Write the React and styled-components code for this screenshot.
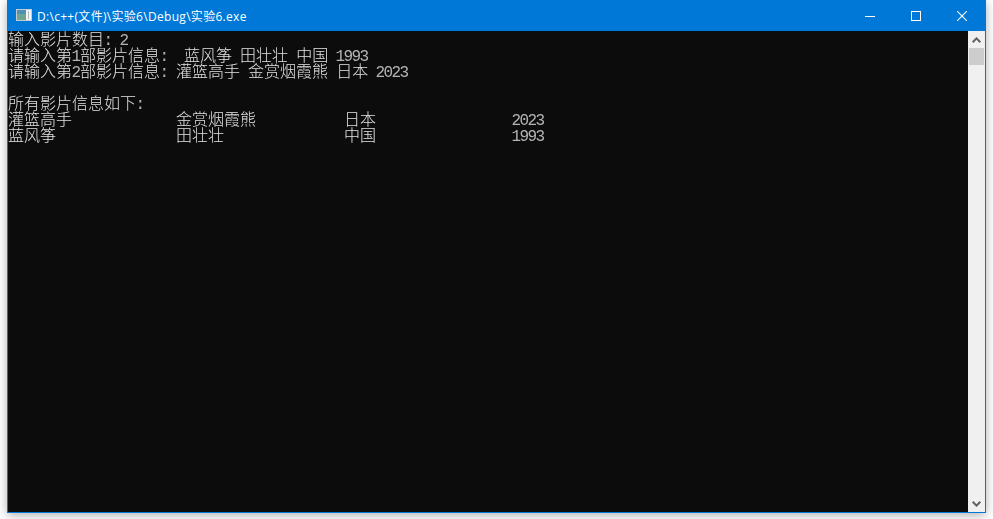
import React from "react";
import styled, { createGlobalStyle } from "styled-components";

const GlobalStyle = createGlobalStyle`
  html, body {
    margin: 0;
    height: 100%;
    background: #ffffff;
    overflow: hidden;
  }
`;

const CJK = `"Noto Sans CJK SC", sans-serif`;

const inputLines = [
  "输入影片数目: 2",
  "请输入第1部影片信息:  蓝风筝 田壮壮 中国 1993",
  "请输入第2部影片信息: 灌篮高手 金赏烟霞熊 日本 2023",
  "",
  "所有影片信息如下:",
];

const movies = [
  ["灌篮高手", "金赏烟霞熊", "日本", "2023"],
  ["蓝风筝", "田壮壮", "中国", "1993"],
];

// the console has 8px cells: ascii takes one, CJK takes two
function ConsoleText({ text }) {
  const parts = text.match(/[\x20-\x7e]+|[^\x20-\x7e]+/g) || [];
  return parts.map((part, i) =>
    /^[\x20-\x7e]/.test(part) ? <Ascii key={i}>{part}</Ascii> : <Wide key={i}>{part}</Wide>
  );
}

export default function App() {
  return (
    <Page>
      <GlobalStyle />
      <Win>
        <TitleBar>
          <AppIcon viewBox="0 0 16 12" width="16" height="12">
            <rect x="0.5" y="0.5" width="15" height="11" fill="#e8eef0" stroke="#c4ccd2" />
            <rect x="1" y="1" width="9" height="10" fill="#6fa58f" />
            <rect x="1" y="1" width="9" height="4" fill="#4f8fb8" />
            <rect x="10" y="1" width="5" height="10" fill="#f4f6f6" />
            <rect x="12" y="2" width="1" height="8" fill="#b4bcc2" />
          </AppIcon>
          <Title>D:\c++(文件)\实验6\Debug\实验6.exe</Title>
          <WinButtons>
            <WinButton>
              <svg width="10" height="10" viewBox="0 0 10 10">
                <path d="M0 5.5H10" stroke="#fff" strokeWidth="1" />
              </svg>
            </WinButton>
            <WinButton>
              <svg width="10" height="10" viewBox="0 0 10 10">
                <rect x="0.5" y="0.5" width="9" height="9" fill="none" stroke="#fff" strokeWidth="1" />
              </svg>
            </WinButton>
            <WinButton>
              <svg width="10" height="10" viewBox="0 0 10 10">
                <path d="M0 0L10 10M10 0L0 10" stroke="#fff" strokeWidth="1.1" />
              </svg>
            </WinButton>
          </WinButtons>
        </TitleBar>
        <Body>
          <Console>
            {inputLines.map((line, i) => (
              <Line key={i}>
                <ConsoleText text={line} />
              </Line>
            ))}
            {movies.map((movie) => (
              <MovieRow key={movie[0]}>
                {movie.map((cell) => (
                  <span key={cell}>
                    <ConsoleText text={cell} />
                  </span>
                ))}
              </MovieRow>
            ))}
          </Console>
          <ScrollBar>
            <ScrollArrow>
              <svg width="9" height="6" viewBox="0 0 9 6">
                <path d="M0.7 5.2L4.5 1.4L8.3 5.2" fill="none" stroke="#606060" strokeWidth="2" />
              </svg>
            </ScrollArrow>
            <Thumb />
            <Track />
            <ScrollArrow>
              <svg width="9" height="6" viewBox="0 0 9 6">
                <path d="M0.7 0.8L4.5 4.6L8.3 0.8" fill="none" stroke="#606060" strokeWidth="2" />
              </svg>
            </ScrollArrow>
          </ScrollBar>
        </Body>
      </Win>
    </Page>
  );
}

const Page = styled.div`
  width: 993px;
  height: 519px;
  padding: 0 7px 6px;
  box-sizing: border-box;
  display: flex;
`;

const Win = styled.div`
  flex: 1;
  display: flex;
  flex-direction: column;
  background: #0078d7;
  box-shadow: 0 2px 10px rgba(0, 0, 0, 0.32);
  padding: 0 1px 1px;
`;

const TitleBar = styled.div`
  height: 31px;
  flex: none;
  display: flex;
  align-items: center;
  padding-left: 8px;
  background: #0078d7;
`;

const AppIcon = styled.svg`
  flex: none;
  margin-top: -1px;
`;

const Title = styled.div`
  margin-left: 5px;
  font: 12px "Open Sans", ${CJK};
  letter-spacing: 0.3px;
  color: #ffffff;
  white-space: nowrap;
`;

const WinButtons = styled.div`
  margin-left: auto;
  display: flex;
  height: 100%;
`;

const WinButton = styled.div`
  width: 46px;
  display: flex;
  align-items: center;
  justify-content: center;
`;

const Body = styled.div`
  flex: 1;
  display: flex;
  min-height: 0;
`;

const Console = styled.div`
  flex: 1;
  background: #0c0c0c;
  color: #e2e2e2;
`;

const Line = styled.div`
  height: 16px;
  white-space: pre;
  will-change: transform;
`;

const MovieRow = styled(Line)`
  display: grid;
  grid-template-columns: 168px 168px 168px 1fr;
`;

const Ascii = styled.span`
  display: inline-block;
  line-height: 14px;
  font-family: "Liberation Mono", monospace;
  font-size: 16px;
  letter-spacing: -1.6px;
  color: #b4b4b4;
  transform: translateX(-0.6px);
`;

const Wide = styled.span`
  display: inline-block;
  line-height: 14px;
  font-family: ${CJK};
  font-size: 16px;
  font-weight: 300;
`;

const ScrollBar = styled.div`
  width: 17px;
  flex: none;
  background: #f0f0f0;
  display: flex;
  flex-direction: column;
`;

const ScrollArrow = styled.div`
  height: 17px;
  flex: none;
  display: flex;
  align-items: center;
  justify-content: center;
`;

const Thumb = styled.div`
  height: 17px;
  flex: none;
  margin: 0 1px;
  background: #cdcdcd;
`;

const Track = styled.div`
  flex: 1;
`;
